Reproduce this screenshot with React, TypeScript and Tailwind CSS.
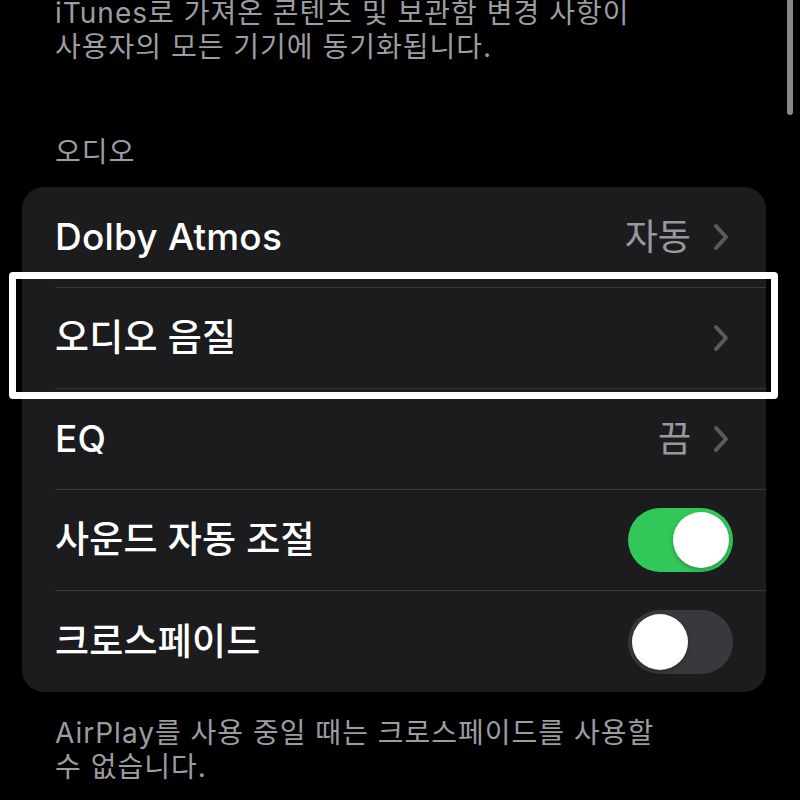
import React from 'react'

const font = { fontFamily: '"Inter", "Noto Sans CJK KR", sans-serif' }

function Chevron() {
  return (
    <svg width="20" height="28" viewBox="0 0 20 28" className="ml-[20px]">
      <path d="M5 3 L15 14 L5 25" fill="none" stroke="#5b5b5f" strokeWidth="4" strokeLinecap="round" strokeLinejoin="round" />
    </svg>
  )
}

function Toggle({ on }: { on: boolean }) {
  return (
    <div
      className={
        'w-[105px] h-[64px] rounded-full p-[4px] flex items-center ' +
        (on ? 'bg-[#32c759] justify-end' : 'bg-[#39393d] justify-start')
      }
    >
      <div className="w-[56px] h-[56px] rounded-full bg-white shadow-[0_2px_4px_rgba(0,0,0,0.25)]" />
    </div>
  )
}

function Row({ label, value, chevron, toggle, last }: { label: string; value?: string; chevron?: boolean; toggle?: boolean; last?: boolean }) {
  return (
    <div className="pl-[33px] h-[101px]">
      <div className={'h-full flex items-center justify-between ' + (last ? '' : 'border-b border-[#38383a]') + (toggle !== undefined ? ' pr-[33px]' : ' pr-[35px]')}>
        <span className="text-[37px] font-medium text-white tracking-[0.2px]">{label}</span>
        <div className="flex items-center">
          {value && <span className="text-[36px] text-[#98989e]">{value}</span>}
          {chevron && <Chevron />}
          {toggle !== undefined && <Toggle on={toggle} />}
        </div>
      </div>
    </div>
  )
}

export default function App() {
  return (
    <div className="relative w-[800px] h-[800px] bg-black overflow-hidden" style={font}>
      <p className="-mt-[4px] px-[55px] text-[28px] leading-[34px] tracking-[1px] text-[#9c9ca1]">
        iTunes로 가져온 콘텐츠 및 보관함 변경 사항이
        <br />
        사용자의 모든 기기에 동기화됩니다.
      </p>

      <p className="mt-[71px] px-[55px] text-[28px] leading-[34px] tracking-[1px] text-[#9c9ca1]">오디오</p>

      <div className="mt-[18px] ml-[22px] w-[744px] rounded-[22px] bg-[#1c1c1e] overflow-hidden">
        <Row label="Dolby Atmos" value="자동" chevron />
        <Row label="오디오 음질" chevron />
        <Row label="EQ" value="끔" chevron />
        <Row label="사운드 자동 조절" toggle={true} />
        <Row label="크로스페이드" toggle={false} last />
      </div>

      <p className="mt-[24px] px-[55px] text-[28px] leading-[34px] tracking-[1px] text-[#9c9ca1]">
        AirPlay를 사용 중일 때는 크로스페이드를 사용할
        <br />수 없습니다.
      </p>

      {/* highlight frame over the audio quality row */}
      <div className="absolute left-[9px] top-[272px] w-[769px] h-[127px] border-[7px] border-white rounded-[4px]" />

      {/* scroll indicator */}
      <div className="absolute left-[787px] top-0 w-[6px] h-[115px] rounded-b-full bg-[#8a8a8c]" />
    </div>
  )
}
